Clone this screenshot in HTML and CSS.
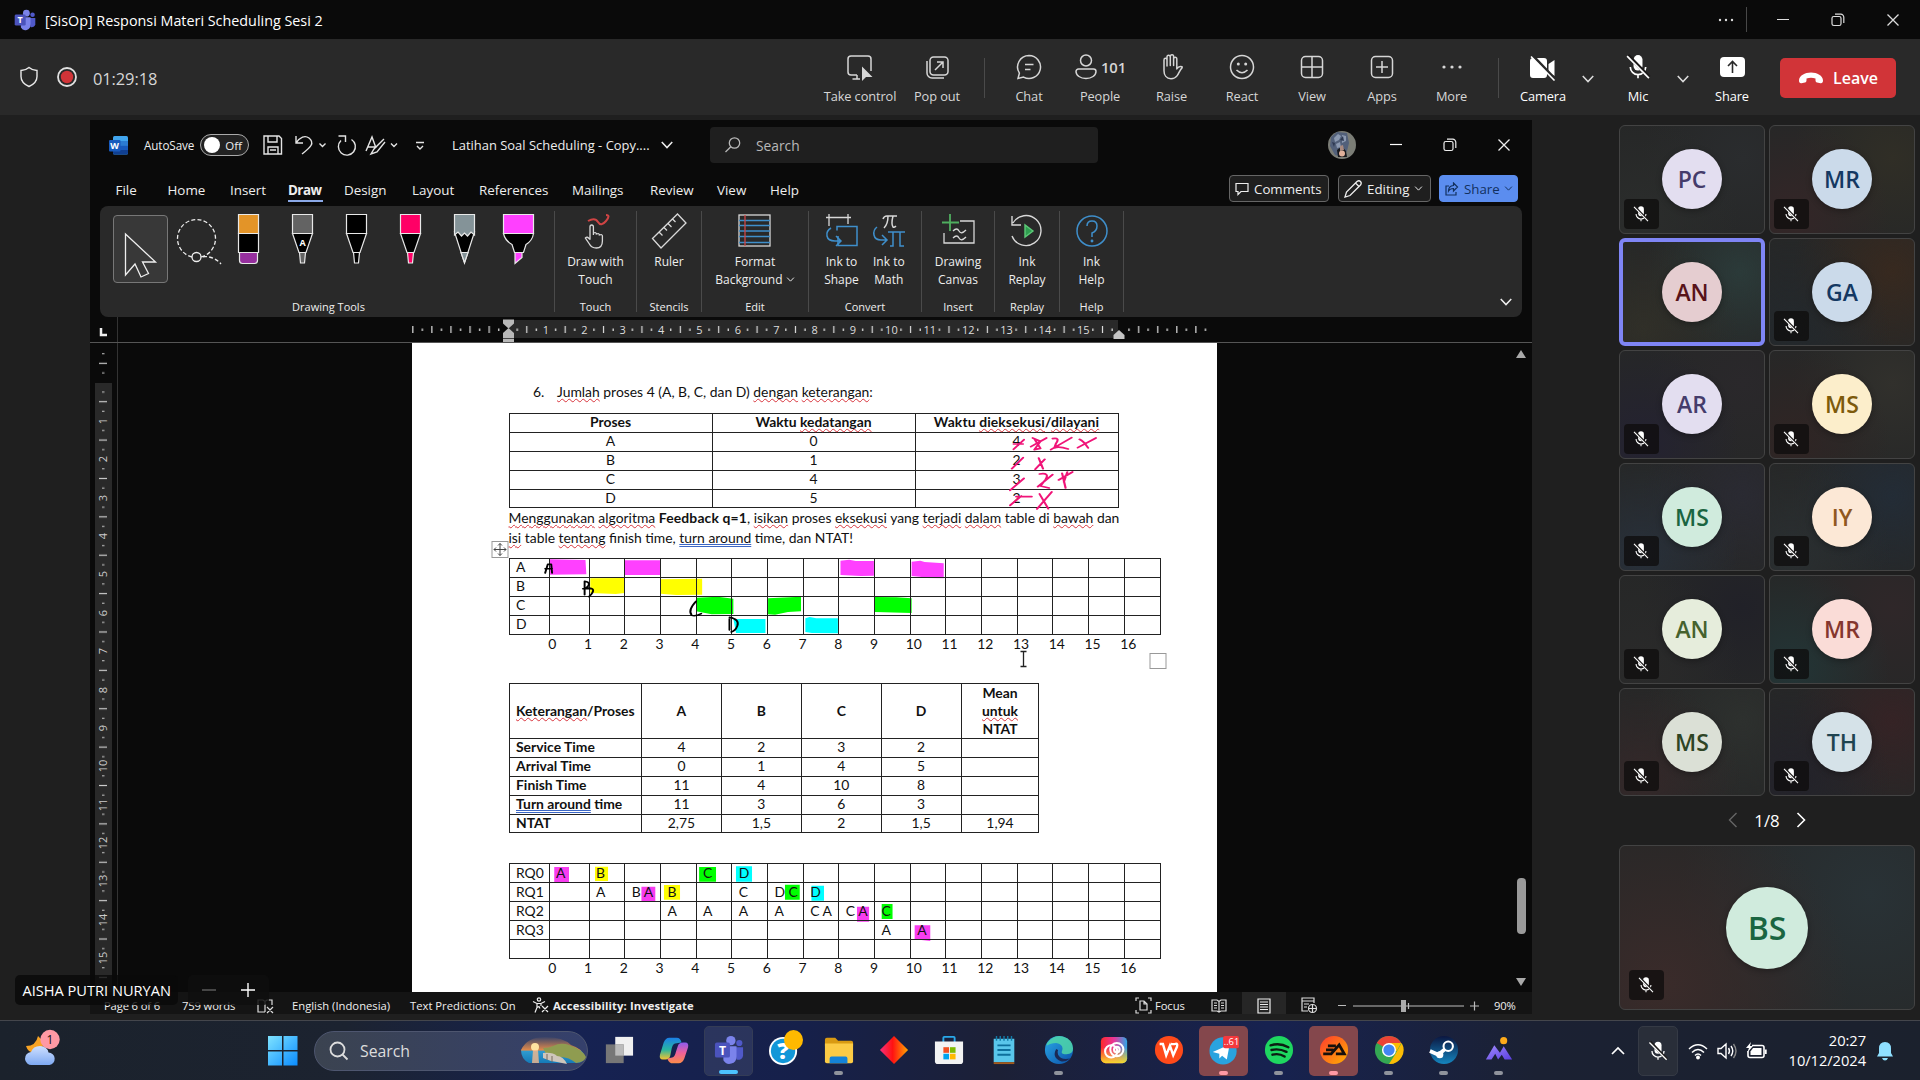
FILE: index.html
```html
<!DOCTYPE html>
<html lang="en">
<head>
<meta charset="utf-8">
<title>[SisOp] Responsi Materi Scheduling Sesi 2</title>
<link rel="stylesheet" href="styles.css">
</head>
<body>
<svg class="defs" width="0" height="0">
  <defs>
    <symbol id="mic-off" viewBox="0 0 20 20"><rect x="6.8" y="1.5" width="6.4" height="11" rx="3.2" fill="currentColor"/><path d="M4.5 10a5.5 5.5 0 0 0 11 0M10 15.5V18" fill="none" stroke="currentColor" stroke-width="1.2"/><path d="M2.8 1.6 18 17.4" stroke="#1c1a1a" stroke-width="2.6"/><path d="M2.2 2.2 17.8 18" stroke="currentColor" stroke-width="1.2"/></symbol>
    <symbol id="chev" viewBox="0 0 12 12"><path d="M1.5 3.5 6 8.2l4.5-4.7" fill="none" stroke="currentColor" stroke-width="1.3"/></symbol>
    <symbol id="restore" viewBox="0 0 14 14"><rect x="1" y="3.5" width="9" height="9" rx="1.8" fill="none" stroke="currentColor" stroke-width="1.2"/><path d="M4 1.2h5.8a3 3 0 0 1 3 3V10" fill="none" stroke="currentColor" stroke-width="1.2"/></symbol>
    <symbol id="close" viewBox="0 0 14 14"><path d="m1.5 1.5 11 11m0-11-11 11" stroke="currentColor" stroke-width="1.3"/></symbol>
    <symbol id="teams" viewBox="0 0 32 32"><circle cx="18" cy="6" r="5" fill="#7b83eb"/><circle cx="27" cy="8.500" r="3.300" fill="#5059c9"/><path d="M22 13h9v9a5 5 0 0 1-7 4z" fill="#5059c9"/><path d="M10 12h14v11a7.500 7.500 0 0 1-14 4z" fill="#7b83eb"/><rect x="1" y="8" width="16" height="16" rx="2" fill="#4b53bc"/><text x="9" y="21" text-anchor="middle" font-size="13" font-weight="700" fill="#fff">T</text></symbol>
    <linearGradient id="gwin" x2="1" y2="1"><stop stop-color="#7fe3ff"/><stop offset="1" stop-color="#0a8cff"/></linearGradient>
    <linearGradient id="gcop" x2="0" y2="1"><stop stop-color="#1b7fe8"/><stop offset=".55" stop-color="#29b6a0"/><stop offset="1" stop-color="#f2c230"/></linearGradient>
    <linearGradient id="gcop2" x2="0" y2="1"><stop stop-color="#8b5cf0"/><stop offset=".5" stop-color="#f0609a"/><stop offset="1" stop-color="#fb8b4a"/></linearGradient>
    <linearGradient id="gdia"><stop stop-color="#f7307c"/><stop offset=".45" stop-color="#ff1212"/><stop offset="1" stop-color="#ffa500"/></linearGradient>
    <linearGradient id="gcc"><stop stop-color="#ff2a2a"/><stop offset=".5" stop-color="#e8359a"/><stop offset="1" stop-color="#2fa8e8"/></linearGradient>
    <linearGradient id="gcc2" x2="0" y2="1"><stop offset=".4" stop-color="#ffd21c" stop-opacity="0"/><stop offset="1" stop-color="#f7d92a"/></linearGradient>
    <linearGradient id="gedge" x2="1" y2="1"><stop stop-color="#2aa9e8"/><stop offset="1" stop-color="#0b51a8"/></linearGradient>
    <linearGradient id="gea" x2="1" y2="1"><stop stop-color="#ff3b2f"/><stop offset="1" stop-color="#ffb000"/></linearGradient>
    <linearGradient id="gst" x2="0" y2="1"><stop stop-color="#0b1640"/><stop offset="1" stop-color="#1586c0"/></linearGradient>
    <linearGradient id="gm" x2="1" y2="1"><stop stop-color="#a18bff"/><stop offset="1" stop-color="#5b3fe0"/></linearGradient>
    <linearGradient id="gsky" x2="0" y2="1"><stop stop-color="#3b4468"/><stop offset=".5" stop-color="#e08a4c"/><stop offset=".55" stop-color="#2f9bd0"/><stop offset="1" stop-color="#157ab8"/></linearGradient>
    <linearGradient id="gcl" x2="0" y2="1"><stop stop-color="#cfe0ff"/><stop offset="1" stop-color="#7ea9f2"/></linearGradient>
  </defs>
</svg>

<header class="titlebar">
  <svg class="t-logo" width="22" height="22"><use href="#teams"/></svg>
  <span class="t-title">[SisOp] Responsi Materi Scheduling Sesi 2</span>
  <div class="t-ctl">
    <svg width="18" height="6" viewBox="0 0 18 6" fill="#ddd"><circle cx="3" cy="3" r="1.200"/><circle cx="9" cy="3" r="1.200"/><circle cx="15" cy="3" r="1.200"/></svg>
    <i class="t-sep"></i>
    <svg class="w-min" width="14" height="14"><path d="M1 6.500h12" stroke="#ddd"/></svg>
    <svg class="w-res" width="14" height="14"><use href="#restore"/></svg>
    <svg class="w-cls" width="14" height="14"><use href="#close"/></svg>
  </div>
</header>

<nav class="toolbar">
  <svg class="shield" width="20" height="22" viewBox="0 0 20 22" fill="none" stroke="#e8e8e8" stroke-width="1.400"><path d="M10 1.500q3.500 3 8 3v6c0 5-3.500 8-8 10-4.500-2-8-5-8-10v-6q4.500 0 8-3z"/></svg>
  <svg class="rec" width="22" height="22" viewBox="0 0 22 22"><circle cx="11" cy="11" r="9" fill="none" stroke="#e0e0e0" stroke-width="1.800"/><circle cx="11" cy="11" r="6.200" fill="#d13438"/></svg>
  <span class="clock">01:29:18</span>
  <div class="tools">
    <div class="tool w80"><svg width="30" height="28" viewBox="0 -1 30 28"><path d="M12 21H6a3 3 0 0 1-3-3V5a3 3 0 0 1 3-3h17a3 3 0 0 1 3 3v12M12 21v4M7.500 25H15" fill="none" stroke="#d6d6d6" stroke-width="1.500"/><path d="M17 12.500v14.500l4-4h6.500z" fill="#d6d6d6"/></svg><span>Take control</span></div>
    <div class="tool w74"><svg width="26" height="28" viewBox="0 -1 26 28" fill="none" stroke="#d6d6d6" stroke-width="1.500"><rect x="6" y="3" width="18" height="18" rx="3.500"/><path d="M3 7v12a5 5 0 0 0 5 5h12M11 16l8-8m-6 0h6v6"/></svg><span>Pop out</span></div>
    <i class="sep w20"></i>
    <div class="tool w70"><svg width="28" height="28" viewBox="0 0 28 28" fill="none" stroke="#d6d6d6" stroke-width="1.500"><path d="M14 2.500a11.500 11.500 0 1 1-5.500 21.600L3 25.500l1.400-5.300A11.500 11.500 0 0 1 14 2.500zM10 11.500h8.500M10 16.500h5.500"/></svg><span>Chat</span></div>
    <div class="tool w72"><div class="pair"><svg width="24" height="28" viewBox="0 0 24 28" fill="none" stroke="#d6d6d6" stroke-width="1.500"><circle cx="12" cy="7.500" r="5.500"/><path d="M4.500 16h15a2.500 2.500 0 0 1 2.500 2.500c0 4-4.500 7-10 7s-10-3-10-7A2.500 2.500 0 0 1 4.500 16z"/></svg><b>101</b></div><span>People</span></div>
    <div class="tool w71"><svg width="26" height="28" viewBox="0 0 26 28" fill="none" stroke="#d6d6d6" stroke-width="1.500" stroke-linejoin="round"><path d="M5 14V7q0-1.700 1.500-1.700T8 7v6V4q0-1.700 1.600-1.700T11.300 4v8.500V3.500q0-1.700 1.700-1.700t1.600 1.700v9V6q0-1.700 1.600-1.700T17.800 6v10c1.300-2.300 3-3 5.200-2.300q.5.300 0 1.200c-2.500 2.500-3 5.500-5 8-1.500 2-3.500 2.800-6 2.800-4.500 0-7-3.500-7-8z"/></svg><span>Raise</span></div>
    <div class="tool w70"><svg width="28" height="28" viewBox="0 0 28 28" fill="none" stroke="#d6d6d6" stroke-width="1.500"><circle cx="14" cy="14" r="11.500"/><path d="M8.500 17q5.500 5.500 11 0"/><g fill="#d6d6d6" stroke="none"><circle cx="10.300" cy="11" r="1.500"/><circle cx="17.700" cy="11" r="1.500"/></g></svg><span>React</span></div>
    <div class="tool w70"><svg width="26" height="28" viewBox="0 0 26 28" fill="none" stroke="#d6d6d6" stroke-width="1.500"><rect x="2.500" y="3.500" width="21" height="21" rx="4"/><path d="M13 3.500v21M2.500 14h21"/></svg><span>View</span></div>
    <div class="tool w70"><svg width="26" height="28" viewBox="0 0 26 28" fill="none" stroke="#d6d6d6" stroke-width="1.500"><rect x="2.500" y="3.500" width="21" height="21" rx="4"/><path d="M13 8v12M7 14h12"/></svg><span>Apps</span></div>
    <div class="tool w69"><svg width="26" height="28" viewBox="0 0 26 28" fill="#d6d6d6"><circle cx="5" cy="14" r="1.600"/><circle cx="13" cy="14" r="1.600"/><circle cx="21" cy="14" r="1.600"/></svg><span>More</span></div>
    <i class="sep w24"></i>
    <div class="tool on w66"><svg width="28" height="28" viewBox="0 -1 28 28"><path d="M4 4h11a3 3 0 0 1 3 3v14a3 3 0 0 1-3 3H4a3 3 0 0 1-3-3V7a3 3 0 0 1 3-3zM19.500 10l6-4v16l-6-4z" fill="#fff"/><path d="M3.500 1.500 27 26" stroke="#292929" stroke-width="3"/><path d="M2 2.500 25.500 26.500" stroke="#fff" stroke-width="1.600"/></svg><span>Camera</span></div>
    <svg class="chv w24" height="12"><use href="#chev" width="24" height="14"/></svg>
    <div class="tool on w76"><svg width="28" height="28"><use href="#mic-off"/></svg><span>Mic</span></div>
    <svg class="chv w14" height="14"><use href="#chev"/></svg>
    <div class="tool on w84"><svg width="28" height="28" viewBox="0 -1 28 28"><rect x="2" y="3" width="25" height="20" rx="4" fill="#fff"/><path d="M14.500 19V8m-4.500 4 4.500-4.500L19 12" fill="none" stroke="#292929" stroke-width="1.600"/></svg><span>Share</span></div>
    <div class="leave"><svg width="26" height="14" viewBox="0 0 26 14"><path d="M1 9.500C1 4.500 7 1.500 13 1.500s12 3 12 8c0 2-1 3-2.500 2.700l-3.500-.8c-1-.2-1.500-1-1.500-2.200V7.500q-4.500-1.600-9 0v1.700c0 1.200-.5 2-1.500 2.200l-3.500.8C2 12.500 1 11.500 1 9.500z" fill="#fff"/></svg>Leave</div>
  </div>
</nav>

<main class="stage">
  <section class="word">
    <div class="w-title">
      <svg class="w-logo" width="19" height="19" viewBox="0 0 19 19"><rect x="4" width="15" height="18.500" rx="1.500" fill="#41a5ee"/><path d="M4 5h15v4.500H4z" fill="#2b7cd3"/><path d="M4 9.500h15V14H4z" fill="#185abd"/><path d="M4 14h15v3a1.500 1.500 0 0 1-1.500 1.500h-12A1.500 1.500 0 0 1 4 17z" fill="#103f91"/><rect y="4" width="11.500" height="11.500" rx="1" fill="#185abd"/><text x="5.700" y="13" text-anchor="middle" font-size="9" font-weight="700" fill="#fff">W</text></svg>
      <span class="autosave">AutoSave</span>
      <span class="toggle"><i></i>Off</span>
      <svg class="qa" width="170" height="24" viewBox="262 133 170 24" fill="none" stroke="#e4e4e4" stroke-width="1.400">
        <path d="M264 136h15l2.500 2.500V154H264zM268 136v6h9v-6M268 154v-7h10v7M270 150h6"/>
        <path d="M296 136v7h7M296 143c4-6 9-8 13-5 6 5 2 9-7 16"/><path d="m319.500 143.500 3 3 3-3"/>
        <path d="M351.500 139.500a8.500 8.500 0 1 1-10.500 1M338.500 136h7v6"/>
        <path d="m366 151 6-14 4 11M368 147h7M384 139l-10 10-3 5 6-2 8-10"/><path d="m391 143.500 3 3 3-3"/>
        <path d="M416 142.500h8M417 146l3 3 3-3"/>
      </svg>
      <span class="docname">Latihan Soal Scheduling - Copy....</span>
      <svg class="dchev" width="14" height="14"><use href="#chev"/></svg>
      <div class="w-search"><svg width="18" height="18" viewBox="0 0 18 18" fill="none" stroke="#b8b8b8" stroke-width="1.300"><circle cx="10.500" cy="7" r="5.200"/><path d="M6.800 10.700 1.500 16"/></svg>Search</div>
      <svg class="w-ava" width="28" height="28" viewBox="0 0 28 28"><circle cx="14" cy="14" r="14" fill="#7b7d76"/><path d="m3 6 6-5 10 1 2 10-2 8-5 6-7-2-5-9z" fill="#52607a"/><path d="m6 7 4-4 3 2-2 4-4 2zM14 4l4 1v5l-4 2zM8 13l4-2 1 5-4 1z" fill="#9aa7bf" opacity=".8"/><path d="m4 11 3 1-1 4zM12 9l3-4 1 5z" fill="#2e3952"/><path d="M9 19q5-5 9 1l1 6h-9z" fill="#17181c"/><path d="m12 15 3-1 1 5-4 1z" fill="#a98a80"/><circle cx="14" cy="22.500" r="3" fill="#e0b09a"/></svg>
      <svg class="wm" width="14" height="14"><path d="M1 6.500h12" stroke="#fff" stroke-width="1.200"/></svg>
      <svg class="wr" width="14" height="14"><use href="#restore"/></svg>
      <svg class="wc" width="14" height="14"><use href="#close"/></svg>
    </div>
    <div class="w-tabs">
      <span class="tab a1">File</span><span class="tab a2">Home</span><span class="tab a3">Insert</span><span class="tab a4 cur">Draw</span><span class="tab a5">Design</span><span class="tab a6">Layout</span><span class="tab a7">References</span><span class="tab a8">Mailings</span><span class="tab a9">Review</span><span class="tab a10">View</span><span class="tab a11">Help</span>
      <div class="w-acts">
        <span class="act c1"><svg width="14" height="14" viewBox="0 0 14 14" fill="none" stroke="#eee" stroke-width="1.200"><path d="M1 1.500h12v8H6L3 12.500v-3H1z"/></svg>Comments</span>
        <span class="act c2"><svg width="20" height="20" viewBox="0 0 20 20" fill="none" stroke="#eee" stroke-width="1.300"><path d="m2 18 1.500-5L14 2.500q2-1.500 3.500 0t0 3.500L7 16.500zM12.500 4l3.500 3.500"/></svg>Editing<svg class="mc" width="9" height="9"><use href="#chev"/></svg></span>
        <span class="act c3"><svg width="14" height="14" viewBox="0 0 14 14" fill="none" stroke="#12305e" stroke-width="1.200"><path d="M4 4H1v9h10v-3M8.500 1l4 4-4 4V6.500Q5 6.500 3.500 9q0-5 5-5.500z"/></svg>Share<svg class="mc" width="9" height="9"><use href="#chev"/></svg></span>
      </div>
    </div>
    <div class="ribbon">
      <div class="grp g1">
        <div class="pens">
          <div class="sel"><svg width="36" height="50" viewBox="0 0 36 50" fill="none" stroke="#eee" stroke-width="1.300"><path d="M3.500 4v41l9.500-11 6 13 7.500-3.500-6-11.500h13z"/></svg></div>
          <svg class="lasso" width="50" height="52" viewBox="0 0 50 52" fill="none" stroke="#eee" stroke-width="1.300"><path d="M19 41A19 19 0 1 1 28 41q12-2 20 7" stroke-dasharray="4 2.200"/><circle cx="23.500" cy="41" r="4.500"/></svg>
          <svg class="pn" width="300" height="52" viewBox="236 213 300 52" stroke="#e8e8e8" stroke-width="1.200">
            <path d="M238.500 214.500h20v19h-20z" fill="#e39428"/><path d="M238.500 233.500h20v19h-20z" fill="#000"/><path d="M239.500 252.500h18v8q0 3-3 3h-12q-3 0-3-3z" fill="#962f9e"/>
            <path d="M292.500 214.500h20v19h-20z" fill="#636363"/><path d="M292.500 233.500h20l-6.500 19h-7z" fill="#000"/><path d="M299.500 252.500h6l-1 10.500h-4z" fill="#636363"/><text x="302.500" y="246" font-size="9" font-weight="700" fill="#fff" stroke="none" text-anchor="middle">A</text>
            <path d="M346.500 214.500h20v19h-20z" fill="#000"/><path d="M346.500 233.500h20l-6.500 19h-7z" fill="#000"/><path d="M353.500 252.500h6l-1 10.500h-4z" fill="#000"/>
            <path d="M400.500 214.500h20v19h-20z" fill="#ff0066"/><path d="M400.500 233.500h20l-6.500 19h-7z" fill="#000"/><path d="M407.500 252.500h6l-1 10.500h-4z" fill="#ff0066"/>
            <path d="M454.500 232l10 31 10-31z" fill="#000"/><path d="M461 252.500h7l-3.500 10z" fill="#849398"/><path d="M454.500 214.500h20V235l-3.500-3-3.500 4-3-3-3 3-3.500-4-3.500 3z" fill="#849398"/>
            <path d="M503.500 214.500h30v19h-30z" fill="#ff40ff"/><path d="M503.500 233.500h30q-1 7-7.500 11l-2.500 8h-9l-2.500-8q-7-4-8.500-11z" fill="#000"/><path d="M515 252.500h7v5l-7 6z" fill="#ff40ff"/>
          </svg>
        </div>
        <em>Drawing Tools</em>
      </div>
      <div class="grp g2"><svg width="34" height="36" viewBox="0 0 34 36" fill="none" stroke="#d8d8d8" stroke-width="1.300"><path d="M9 8q7-4 10 1t8-1 0-6" stroke="#d04444" stroke-width="2"/><path d="M11 26V14q0-2 1.700-2t1.700 2v8-2q3-1 3 1 3-1 3 1 3-1 3 1v5q0 7-6 7-5 0-7-4l-4-6q2-2 4 1z"/></svg><span>Draw with<br>Touch</span><em>Touch</em></div>
      <div class="grp g3"><svg width="36" height="36" viewBox="0 0 36 36" fill="none" stroke="#d8d8d8" stroke-width="1.300"><path d="M1.500 25.500 26.500 1 35 10 10 35zM8 19l3.500 3.500M13 14.500l3 3M17 10.500l3.500 3.500M21.500 6l3 3"/></svg><span>Ruler</span><em>Stencils</em></div>
      <div class="grp g4"><svg width="34" height="34" viewBox="0 0 34 34" fill="none" stroke="#d8d8d8" stroke-width="1.300"><rect x="1" y="1" width="31" height="31"/><path d="M1 6.500h31M1 11.500h31M1 17h31M1 22.500h31M1 28.500h31" stroke="#3f8fcb" stroke-width="1.500"/><path d="M7 1v31" stroke="#d04444"/></svg><span>Format<br>Background <svg width="9" height="9"><use href="#chev"/></svg></span><em>Edit</em></div>
      <div class="grp g5"><div class="two"><div><svg width="34" height="34" viewBox="0 0 34 34" fill="none" stroke="#d8d8d8" stroke-width="1.300"><path d="M4 0v12M23 0v10M1 3.500h25"/><path d="M13 22v9.500h19v-19H12v4" stroke="#3f8fcb" stroke-width="1.500"/><path d="M6 14q-5 3-4 8t8 5h5m-4-5 5 5-5 5" stroke="#3f8fcb" stroke-width="1.500"/></svg><span>Ink to<br>Shape</span></div><div><svg width="34" height="34" viewBox="0 0 34 34" fill="none" stroke="#d8d8d8" stroke-width="1.500"><path d="M11 5q1-3 4-3h10M16 2q0 8-4 12M21 2q-2 8 0 11 1 1 3-1"/><path d="M16 18h17M21 18v14h-3M28 18v14h4" stroke="#3f8fcb"/><path d="M5 13q-4 3-3 8t7 5h5m-4-5 5 5-5 5" stroke="#3f8fcb"/></svg><span>Ink to<br>Math</span></div></div><em>Convert</em></div>
      <div class="grp g6"><svg width="36" height="34" viewBox="0 0 36 34" fill="none" stroke="#d8d8d8" stroke-width="1.300"><path d="M4 19v10h30V7H20M13 17q4-4 6 0t7-1M13 24q4-4 6 0t7-1"/><path d="M10 0v17M2 8.500h17" stroke="#4fae5f" stroke-width="1.800"/></svg><span>Drawing<br>Canvas</span><em>Insert</em></div>
      <div class="grp g7"><svg width="34" height="34" viewBox="0 0 34 34" fill="none" stroke="#d8d8d8" stroke-width="1.400"><path d="M3 9a15 15 0 1 1-1 13M2 2v9h9"/><path d="M15 11v12l8-6z" fill="#2f9e50" stroke="#5cc977"/></svg><span>Ink<br>Replay</span><em>Replay</em></div>
      <div class="grp g8"><svg width="34" height="34" viewBox="0 0 34 34" fill="none" stroke="#3f8fcb" stroke-width="1.500"><circle cx="17" cy="17" r="15"/><path d="M12 12q0-5 5-5t5 5-5 7v4"/><circle cx="17" cy="27" r=".7"/></svg><span>Ink<br>Help</span><em>Help</em></div>
      <svg class="rchev" width="14" height="14"><use href="#chev"/></svg>
    </div>
    <svg class="hruler" width="1442" height="26" viewBox="90 317 1442 26">
      <defs>
        <pattern id="tk" patternUnits="userSpaceOnUse" x="507.600" y="0" width="38.380" height="343"><path d="M19.200 326v7" stroke="#ddd" stroke-width="1.200"/><path d="M9.600 328.500v2.500M28.800 328.500v2.500" stroke="#ddd" stroke-width="1.300"/></pattern>
        <pattern id="tl" patternUnits="userSpaceOnUse" x="412" y="0" width="19.100" height="343"><path d="M.8 326v7" stroke="#ddd" stroke-width="1.200"/><path d="M10.300 328.500v2.500" stroke="#ddd" stroke-width="1.300"/></pattern>
      </defs>
      <rect x="508" y="320" width="610" height="18" fill="#292929"/>
      <rect x="412" y="320" width="92" height="20" fill="url(#tl)"/>
      <rect x="515" y="320" width="603" height="20" fill="url(#tk)"/>
      <rect x="1121" y="320" width="90" height="20" fill="url(#tl)"/>
      <g font-size="11" fill="#ddd" text-anchor="middle"><text x="546" y="333.500">1</text><text x="584.400" y="333.500">2</text><text x="622.700" y="333.500">3</text><text x="661.100" y="333.500">4</text><text x="699.500" y="333.500">5</text><text x="737.900" y="333.500">6</text><text x="776.300" y="333.500">7</text><text x="814.600" y="333.500">8</text><text x="853" y="333.500">9</text><text x="891.400" y="333.500">10</text><text x="929.800" y="333.500">11</text><text x="968.200" y="333.500">12</text><text x="1006.500" y="333.500">13</text><text x="1044.900" y="333.500">14</text><text x="1083.300" y="333.500">15</text></g>
      <path d="M503 319.500h11v4l-5.500 5-5.500-5zM503 342v-9l5.500-5 5.500 5v9z" fill="#b8b8b8"/><path d="M503 338.500h11" stroke="#444"/>
      <path d="M1113.500 339v-4l5.500-5 5.500 5v4z" fill="#c4c4c4"/>
      <path d="M101 328v7h6" fill="none" stroke="#eee" stroke-width="2.500"/>
      <path d="M117.500 317v26" stroke="#333"/><path d="M90 342.500h1442" stroke="#555"/>
    </svg>
    <div class="docarea">
      <svg class="vruler" width="32" height="649" viewBox="90 343 32 649">
        <defs><pattern id="tv" patternUnits="userSpaceOnUse" x="0" y="382.500" width="120" height="38.380"><path d="M99 19.200h8" stroke="#ccc" stroke-width="1.200"/><path d="M102 9.600h2.500M102 28.800h2.500" stroke="#ccc" stroke-width="1.200"/></pattern></defs>
        <rect x="95" y="383" width="17" height="609" fill="#292929"/>
        <rect x="95" y="346" width="17" height="646" fill="url(#tv)"/>
        <path d="M117.500 343v649" stroke="#333"/>
        <g font-size="11" fill="#ccc" text-anchor="middle"><text transform="translate(107 421) rotate(-90)">1</text><text transform="translate(107 459) rotate(-90)">2</text><text transform="translate(107 498) rotate(-90)">3</text><text transform="translate(107 536) rotate(-90)">4</text><text transform="translate(107 574) rotate(-90)">5</text><text transform="translate(107 613) rotate(-90)">6</text><text transform="translate(107 651) rotate(-90)">7</text><text transform="translate(107 690) rotate(-90)">8</text><text transform="translate(107 728) rotate(-90)">9</text><text transform="translate(107 766) rotate(-90)">10</text><text transform="translate(107 805) rotate(-90)">11</text><text transform="translate(107 843) rotate(-90)">12</text><text transform="translate(107 881) rotate(-90)">13</text><text transform="translate(107 920) rotate(-90)">14</text><text transform="translate(107 958) rotate(-90)">15</text></g>
      </svg>
      <article class="page">
        <p class="q"><span>6.</span><u>Jumlah</u> proses 4 (A, B, C, dan D) <u>dengan</u> <u>keterangan</u>:</p>
        <table class="tb1">
          <tr><th>Proses</th><th>Waktu <u>kedatangan</u></th><th>Waktu <u>dieksekusi</u>/<u>dilayani</u></th></tr>
          <tr><td>A</td><td>0</td><td>4</td></tr>
          <tr><td>B</td><td>1</td><td>2</td></tr>
          <tr><td>C</td><td>4</td><td>3</td></tr>
          <tr><td>D</td><td>5</td><td>2</td></tr>
        </table>
        <p class="para"><u>Menggunakan</u> <u>algoritma</u> <b>Feedback q=1</b>, <u>isikan</u> proses <u>eksekusi</u> yang <u>terjadi</u> <u>dalam</u> table di <u>bawah</u> dan<br><u>isi</u> table <u>tentang</u> finish time, <u class="bl">turn around</u> time, dan NTAT!</p>
        <table class="gantt">
          <tr><td>A<td><td><td><td><td><td><td><td><td><td><td><td><td><td><td><td><td>
          <tr><td>B<td><td><td><td><td><td><td><td><td><td><td><td><td><td><td><td><td>
          <tr><td>C<td><td><td><td><td><td><td><td><td><td><td><td><td><td><td><td><td>
          <tr><td>D<td><td><td><td><td><td><td><td><td><td><td><td><td><td><td><td><td>
        </table>
        <div class="axis"><span>0</span><span>1</span><span>2</span><span>3</span><span>4</span><span>5</span><span>6</span><span>7</span><span>8</span><span>9</span><span>10</span><span>11</span><span>12</span><span>13</span><span>14</span><span>15</span><span>16</span></div>
        <table class="tb3">
          <tr class="hd"><th><u>Keterangan</u>/Proses</th><th>A</th><th>B</th><th>C</th><th>D</th><th>Mean<br><u>untuk</u><br>NTAT</th></tr>
          <tr><th>Service Time</th><td>4</td><td>2</td><td>3</td><td>2</td><td></td></tr>
          <tr><th>Arrival Time</th><td>0</td><td>1</td><td>4</td><td>5</td><td></td></tr>
          <tr><th>Finish Time</th><td>11</td><td>4</td><td>10</td><td>8</td><td></td></tr>
          <tr><th><u class="bl">Turn around</u> time</th><td>11</td><td>3</td><td>6</td><td>3</td><td></td></tr>
          <tr><th>NTAT</th><td>2,75</td><td>1,5</td><td>2</td><td>1,5</td><td>1,94</td></tr>
        </table>
        <table class="gantt rq">
          <tr><td>RQ0</td><td>A</td><td>B</td><td></td><td></td><td>C</td><td>D</td><td></td><td></td><td></td><td></td><td></td><td></td><td></td><td></td><td></td><td></td><td></td></tr>
          <tr><td>RQ1</td><td></td><td>A</td><td>B&nbsp;A</td><td>B</td><td></td><td>C</td><td>D&nbsp;C</td><td>D</td><td></td><td></td><td></td><td></td><td></td><td></td><td></td><td></td><td></td></tr>
          <tr><td>RQ2</td><td></td><td></td><td></td><td>A</td><td>A</td><td>A</td><td>A</td><td>C&nbsp;A</td><td>C&nbsp;A</td><td>C</td><td></td><td></td><td></td><td></td><td></td><td></td><td></td></tr>
          <tr><td>RQ3</td><td></td><td></td><td></td><td></td><td></td><td></td><td></td><td></td><td></td><td>A</td><td>A</td><td></td><td></td><td></td><td></td><td></td><td></td></tr>
          <tr><td></td><td></td><td></td><td></td><td></td><td></td><td></td><td></td><td></td><td></td><td></td><td></td><td></td><td></td><td></td><td></td><td></td><td></td></tr>
        </table>
        <div class="axis"><span>0</span><span>1</span><span>2</span><span>3</span><span>4</span><span>5</span><span>6</span><span>7</span><span>8</span><span>9</span><span>10</span><span>11</span><span>12</span><span>13</span><span>14</span><span>15</span><span>16</span></div>
        <svg class="marks" width="805" height="649" viewBox="411.500 343 805 649">
          <g transform="translate(490 370) scale(.4337 .3333)">
            <path d="M137 568l82 2 2 43-84 1zM310 571h81v44h-81zM807 572l20-3 15 4h42v44l-30 1-47-3zM971 575l20-3 10 4 44 4v45l-40-1-15-4-19-2z" fill="#ff40ff"/>
            <path d="M230 625l78-1 1 45-20 3-59-3zM392 628l96-2v48l-60 1-36-4z" fill="#ff0"/>
            <path d="M474 683l50-3 36 6v46l-50 1-36-9zM640 685l76-5v44l-30 2-30 8-16-1zM886 681l50 1 35 3v44l-85-3z" fill="#0f0"/>
            <path d="M560 747h74v42h-68zM726 745l10-4 15 4h50v45l-60-1-15-3z" fill="#0ff"/>
          </g>
          <g transform="translate(490 660) scale(.4337 .3333)">
            <path d="M147 621h34v45h-34zM348 680h32v43h-32zM845 740h28v45h-28zM978 796h36v47l-36-5z" fill="#f83df0"/>
            <path d="M241 620h30v43h-30zM400 675h37v44h-37z" fill="#ff0"/>
            <path d="M481 621h39v44h-39zM679 674h34v45h-34zM902 732h25v45h-25z" fill="#0f0"/>
            <path d="M566 619h37v46h-37zM740 677h29v45h-29z" fill="#0ff"/>
          </g>
        </svg>
        <svg class="ink" width="805" height="649" viewBox="411.500 343 805 649" fill="none">
          <g transform="translate(490 370) scale(.4337 .3333)" stroke-linecap="round" stroke-linejoin="round">
            <g stroke="#f01478" stroke-width="5">
              <path d="M1206 238l24-29M1206 222h22M1250 204l18 10-14 25 14-4-14-28M1246 230l36-26M1296 206q18-4 8 14l-4 14q10-6 32 3M1292 239l48-36M1358 208q10 6 20 26M1354 233l42-29"/>
              <path d="M1202 296l26-33M1264 264l10 32M1256 298l22-30M1198 361l32-36M1266 312q24-5 14 16l-12 20 20 6M1262 350l34-36M1318 310l8 44M1310 330l32-24M1330 306l-8 30"/>
              <path d="M1198 406l26-28M1212 380h36M1266 372l20 44M1260 417l34-51"/>
            </g>
            <g stroke="#000" stroke-width="4.500">
              <path d="M126 609l6-26 8 0 2 26M126 596h16"/><path d="M217 634v40M217 634q18 4 4 19 28 0 6 27M213 656h18"/><path d="M474 694q-20 28-10 42 8 4 22-5"/><path d="M551 746v34M551 742q24 6 18 26-4 14-14 18"/>
            </g>
          </g>
          <path d="M1020 651.500h6M1023 651.500v15M1020 666.500h6" stroke="#222" stroke-width="1.300"/>
          <rect x="1149.500" y="653.500" width="16" height="15" fill="#fff" stroke="#999"/>
          <rect x="491.500" y="541.500" width="16" height="16" fill="#fff" stroke="#999"/>
          <path d="M499.500 543.500v12M493.500 549.500h12M497.500 545.500l2-2 2 2M497.500 553.500l2 2 2-2M495.500 547.500l-2 2 2 2M503.500 547.500l2 2-2 2" stroke="#444"/>
        </svg>
      </article>
      <div class="scroll"><svg width="12" height="10"><path d="M6 1l5 8H1z" fill="#aaa"/></svg><i></i><svg width="12" height="10"><path d="M6 9 1 1h10z" fill="#aaa"/></svg></div>
    </div>
    <div class="status">
      <span class="s1">Page 6 of 6</span><span class="s2">759 words</span>
      <svg class="s3" width="17" height="16" viewBox="0 0 17 16" fill="none" stroke="#ddd" stroke-width="1.200"><path d="M8 14H1V2h5l2 1.500L10 2h5v5M8 3.500V14M10 9l6 6m0-6-6 6"/></svg>
      <span class="s4">English (Indonesia)</span><span class="s5">Text Predictions: On</span>
      <svg class="s6" width="17" height="17" viewBox="0 0 17 17" fill="none" stroke="#eee" stroke-width="1.200"><circle cx="7" cy="2.500" r="1.700"/><path d="M1 4.500l4 2v4l-2 5M13 4.500l-4 2-4 0M9 6.500V9M5 10.500l2-1 1 2M10 9l6 6m0-6-6 6"/></svg>
      <b class="s7">Accessibility: Investigate</b>
      <svg class="s8" width="17" height="17" viewBox="0 0 17 17" fill="none" stroke="#ddd" stroke-width="1.200"><path d="M1 4V1h3M13 1h3v3M16 13v3h-3M4 16H1v-3M5 4h4l3 3v6H5zM9 4v3h3"/></svg>
      <span class="s9">Focus</span>
      <svg class="s10" width="16" height="16" viewBox="0 0 16 16" fill="none" stroke="#ddd" stroke-width="1.200"><path d="M1 2h5l2 1.500L10 2h5v11h-5l-2 1-2-1H1zM8 3.500V14M3 5h3M3 7.500h3M3 10h3M10 5h3M10 7.500h3M10 10h3"/></svg>
      <span class="s11"><svg width="14" height="16" viewBox="0 0 14 16" fill="none" stroke="#eee" stroke-width="1.200"><path d="M1 1h12v14H1zM3 4h8M3 6.500h8M3 9h8M3 11.500h8"/></svg></span>
      <svg class="s12" width="17" height="17" viewBox="0 0 17 17" fill="none" stroke="#ddd" stroke-width="1.200"><path d="M7 14H1V1h12v5M1 4h12M3 7h5M3 10h3"/><circle cx="11.500" cy="11.500" r="4"/><path d="M7.500 11.500h8M11.500 7.500v8"/></svg>
      <svg class="s13" width="142" height="16" viewBox="0 0 142 16" stroke="#bbb" stroke-width="1.200"><path d="M1 7.500h8M16 8h111M133 8h9M137.500 3.500v9"/><path d="M66.500 2v12" stroke="#aaa" stroke-width="5"/><path d="M71.500 5v6"/></svg>
      <span class="s14">90%</span>
    </div>
  </section>
  <div class="who">AISHA PUTRI NURYAN</div>
  <div class="zoomer"><svg width="16" height="16"><path d="M1 8h14" stroke="#666" stroke-width="1.300"/></svg><svg width="16" height="16"><path d="M1 8h14M8 1v14" stroke="#fff" stroke-width="1.400"/></svg></div>

  <aside class="people">
    <div class="tiles">
      <div class="tile k1"><b>PC</b><i><svg><use href="#mic-off"/></svg></i></div>
      <div class="tile k2"><b>MR</b><i><svg><use href="#mic-off"/></svg></i></div>
      <div class="tile k3 talk"><b>AN</b></div>
      <div class="tile k4"><b>GA</b><i><svg><use href="#mic-off"/></svg></i></div>
      <div class="tile k5"><b>AR</b><i><svg><use href="#mic-off"/></svg></i></div>
      <div class="tile k6"><b>MS</b><i><svg><use href="#mic-off"/></svg></i></div>
      <div class="tile k7"><b>MS</b><i><svg><use href="#mic-off"/></svg></i></div>
      <div class="tile k8"><b>IY</b><i><svg><use href="#mic-off"/></svg></i></div>
      <div class="tile k9"><b>AN</b><i><svg><use href="#mic-off"/></svg></i></div>
      <div class="tile k10"><b>MR</b><i><svg><use href="#mic-off"/></svg></i></div>
      <div class="tile k11"><b>MS</b><i><svg><use href="#mic-off"/></svg></i></div>
      <div class="tile k12"><b>TH</b><i><svg><use href="#mic-off"/></svg></i></div>
    </div>
    <div class="pager"><svg width="10" height="16"><path d="M8.500 1 1.500 8l7 7" fill="none" stroke="#666" stroke-width="1.400"/></svg><span>1/8</span><svg width="10" height="16"><path d="m1.500 1 7 7-7 7" fill="none" stroke="#fff" stroke-width="1.600"/></svg></div>
    <div class="tile big k13"><b>BS</b><i><svg><use href="#mic-off"/></svg></i></div>
  </aside>
</main>

<footer class="taskbar">
  <svg class="weather" width="36" height="40" viewBox="24 1026 36 40"><path d="M38 1035q-2 10-12 10 2 7 9 7 9-2 8-12z" fill="#f7a325"/><circle cx="50" cy="1038.500" r="9.700" fill="#ff99a4"/><text x="50" y="1043" font-size="12" text-anchor="middle" fill="#111">1</text><path d="M32 1064a6.500 6.500 0 0 1-1-13q2-6 9-6t8.500 6.500a6.300 6.300 0 0 1 1 12.500z" fill="url(#gcl)"/></svg>
  <svg class="win" width="30" height="30" viewBox="0 0 30 30" fill="url(#gwin)"><path d="M0 0h14v14H0zM15.500 0h14v14h-14zM0 15.500h14v14H0zM15.500 15.500h14v14h-14z"/></svg>
  <div class="t-search"><svg width="20" height="20" viewBox="0 0 20 20" fill="none" stroke="#ddd" stroke-width="1.800"><circle cx="8.500" cy="8.500" r="7"/><path d="m13.500 13.500 5 5"/></svg><span>Search</span>
    <svg class="scene" width="68" height="30" viewBox="0 0 68 30"><path d="M2 14Q8 1 26 1q18 0 26 8 12 4 14 12-2 6-8 6H10Q2 23 2 14z" fill="url(#gsky)"/><circle cx="16" cy="11" r="4" fill="#ffe2a0"/><path d="M14 14h5l1 13h-7z" fill="#f5b98c" opacity=".8"/><path d="M24 12q6 0 10-2 8-4 16-1 14 5 17 12-1 5-10 6-8-7-18-6-10 0-12-3z" fill="#8f9c50"/><path d="M24 17q10-1 14 3 6 0 10 8l-10-2-6-1-8-3z" fill="#cfc6bb"/><path d="M28 24v-6M33 26v-6" stroke="#776a5f"/></svg>
  </div>
  <div class="apps">
    <div class="app"><svg viewBox="0 0 32 32"><path d="M12 2h19v20H12z" fill="#f0f0f0"/><path d="M2 10h19v20H2z" fill="#777"/><path d="M12 10h9v12h-9z" fill="#bbb"/></svg></div>
    <div class="app"><svg viewBox="0 0 32 32"><path d="M11 3h8q4 0 5 5l-7 1q-3 1-4 8l-1 5q-1 4-5 4H4q-4 0-3-5l4-13q2-5 6-5z" fill="url(#gcop)"/><path d="M25 8h3q4 0 3 5l-4 12q-2 5-6 5h-8q-3-1-4-5l5-1q3-1 4-6l2-6q1-4 6-4z" fill="url(#gcop2)"/></svg></div>
    <div class="app act2"><svg viewBox="0 0 32 32"><use href="#teams"/></svg><i class="run wide"></i></div>
    <div class="app"><svg viewBox="0 0 32 32"><circle cx="15" cy="17" r="15" fill="#fff"/><circle cx="15" cy="17" r="13" fill="#1297d8"/><text x="15" y="26" text-anchor="middle" font-size="25" font-weight="800" fill="#fff">?</text></svg><i class="dot"></i></div>
    <div class="app"><svg viewBox="0 0 32 32"><path d="M1 5q0-2 2-2h9l3 3h14q2 0 2 2v4H1z" fill="#d99a12"/><path d="M1 9h30v19q0 2-2 2H3q-2 0-2-2z" fill="#fccb45"/><path d="M6 30v-5q0-2 2-2h15q2 0 2 2v5z" fill="#1483d8"/></svg><i class="run"></i></div>
    <div class="app"><svg viewBox="0 0 32 32"><path d="m16 1 15 15-15 15L1 16z" fill="url(#gdia)"/></svg></div>
    <div class="app"><svg viewBox="0 0 32 32"><path d="M10 8V3q0-1 1-1h10q1 0 1 1v5" fill="none" stroke="#29a8ea" stroke-width="2"/><path d="M1 7h30v21q0 3-3 3H4q-3 0-3-3z" fill="#f3f3f3"/><path d="M10 13h6v6h-6z" fill="#f25022"/><path d="M17 13h6v6h-6z" fill="#7fba00"/><path d="M10 20h6v6h-6z" fill="#00a4ef"/><path d="M17 20h6v6h-6z" fill="#ffb900"/></svg></div>
    <div class="app"><svg viewBox="0 0 32 32"><path d="M5 4h22v25H5z" fill="#59c6ea"/><path d="M5 29h22v2H5z" fill="#a35a1d"/><path d="M8 1v5M12 1v5M16 1v5M20 1v5M24 1v5" stroke="#127ba8" stroke-width="1.500"/><path d="M9 11h14M9 16h14M9 21h14" stroke="#0d6f9c" stroke-width="2"/></svg></div>
    <div class="app"><svg viewBox="0 0 32 32"><circle cx="16" cy="16" r="15" fill="url(#gedge)"/><path d="M3 9Q10-1 20 1.500q11 3 11 13 0 6-7 6-6 0-5-3 3-7-6-9-6 0-10 3z" fill="#4fd6a8" opacity=".85"/><path d="M13 15q-5 9 5 13 5 1 10-3-10 2-13-4-1-3 0-5z" fill="#1b2a55"/></svg><i class="run"></i></div>
    <div class="app"><svg viewBox="0 0 32 32"><rect x="2" y="2" width="28" height="28" rx="5" fill="url(#gcc)"/><rect x="2" y="2" width="28" height="28" rx="5" fill="url(#gcc2)"/><g fill="none" stroke="#fff" stroke-width="2.200"><circle cx="13" cy="17.500" r="6.500"/><circle cx="19" cy="15.500" r="7"/><circle cx="19" cy="15.500" r="3"/></g></svg></div>
    <div class="app"><svg viewBox="0 0 32 32"><circle cx="16" cy="16" r="15" fill="#ff4a1a"/><path d="M6 9.500h3.500l3.500 12 4-10 3.500 10 4-9q1-3.500-1.500-3t-5 0" fill="none" stroke="#fff" stroke-width="2.600"/></svg></div>
    <div class="app alert"><svg viewBox="0 0 32 32"><circle cx="15" cy="17" r="14.500" fill="#29a3df"/><path d="m4 18 18-8-3 16-5-4-3 3v-5z" fill="#fff"/><rect x="15" y="1" width="17" height="13" rx="2" fill="#f5393d"/><text x="24" y="11" font-size="10" fill="#fff" text-anchor="middle">..61</text></svg><i class="run pink"></i></div>
    <div class="app"><svg viewBox="0 0 32 32"><circle cx="16" cy="16" r="15" fill="#1ed760"/><path d="M7 11q10-3 19 2M8 16q8-2 16 2M9 21q7-2 13 2" fill="none" stroke="#0c1c12" stroke-width="2.500" stroke-linecap="round"/></svg><i class="run"></i></div>
    <div class="app alert"><svg viewBox="0 0 32 32"><circle cx="16" cy="16" r="15" fill="url(#gea)"/><path d="M9.500 11.500h8.500M7.500 15.800h8M4.500 20.200H13l8.500-9.700 5.500 9.700h-9" fill="none" stroke="#16100c" stroke-width="3"/></svg><i class="run pink"></i></div>
    <div class="app"><svg viewBox="0 0 32 32"><circle cx="16" cy="16" r="15" fill="#34a853"/><path d="M16 16 3 8.500a15 15 0 0 1 26 0z" fill="#ea4335"/><path d="M16 31 23 20l6.500-11.500A15 15 0 0 1 16 31z" fill="#fbbc05"/><path d="M16 8.500h13l-5 9z" fill="#fbbc05"/><circle cx="16" cy="16" r="7.500" fill="#fff"/><circle cx="16" cy="16" r="6" fill="#4285f4"/></svg><i class="run"></i></div>
    <div class="app"><svg viewBox="0 0 32 32"><circle cx="16" cy="16" r="15" fill="url(#gst)"/><circle cx="20.500" cy="12" r="5" fill="none" stroke="#fff" stroke-width="2.200"/><path d="m1 17 9 4 7-6" fill="none" stroke="#fff" stroke-width="4"/><circle cx="11.500" cy="21" r="3.800" fill="#fff"/></svg><i class="run"></i></div>
    <div class="app"><svg viewBox="0 0 32 32"><path d="m2 26 9-15 6 8 4-7 9 14h-8l-3-5-4 5-3-6-4 6z" fill="url(#gm)"/><circle cx="21" cy="6" r="3.800" fill="#ffab1a"/></svg><i class="run"></i></div>
  </div>
  <div class="tray">
    <svg class="up" width="14" height="10"><path d="m1 8 6-6 6 6" fill="none" stroke="#fff" stroke-width="1.700"/></svg>
    <span class="traymic"><svg width="22" height="22"><use href="#mic-off"/></svg></span>
    <svg width="22" height="18" viewBox="0 0 22 18" fill="none" stroke="#fff" stroke-width="1.500"><path d="M2 7q9-8.500 18 0M5 10.500q6-6 12 0M8 13.500q3-3 6 0"/><circle cx="11" cy="15.500" r="1.200" fill="#fff"/></svg>
    <svg width="20" height="18" viewBox="0 0 20 18" fill="none" stroke="#fff" stroke-width="1.400"><path d="M1 6.500h3L9 2v14l-5-4.500H1zM11.500 6q2 3 0 6M14 4q3.500 5 0 10"/><path d="M16.500 2q5 7 0 14" stroke="#888"/></svg>
    <svg width="22" height="18" viewBox="0 0 22 18"><path d="M7 3.500h10q2 0 2 2v8q0 2-2 2H5q-2 0-2-2V9" fill="none" stroke="#fff" stroke-width="1.600"/><path d="M8 6h8.500v7H5.500V9.500z" fill="#fff"/><path d="M20.800 7.500v4.500" stroke="#fff" stroke-width="1.800"/><path d="M6 0 1 6h3l-2 5 6-7H5z" fill="#fff"/></svg>
    <div class="when">20:27<br>10/12/2024</div>
    <svg class="bell" width="18" height="20" viewBox="0 0 18 20" fill="#8fe0ff"><path d="M9 1q6 0 6 6.500V12l2 3.500H1L3 12V7.500Q3 1 9 1zM6 17h6q-1 2.500-3 2.500T6 17z"/></svg>
  </div>
</footer>
</body>
</html>
```
FILE: styles.css
```css
*{box-sizing:border-box}
body{margin:0;width:1920px;height:1080px;overflow:hidden;background:#1f1f1f;color:#fff;font-family:"Open Sans","Noto Sans",sans-serif;font-size:13px;display:flex;flex-direction:column}
.defs{position:absolute}
svg{flex:none;display:block}
i,em{font-style:normal}

.titlebar{height:39px;background:#0a0a0a;display:flex;align-items:center;padding-left:14px}
.t-title{margin-left:9px;font-size:14.350px;padding-top:1px}
.t-ctl{margin-left:auto;display:flex;align-items:center;width:203px;color:#ddd}
.t-sep{width:1px;height:25px;background:#484848;margin:0 29px 0 11px}
.w-res{margin-left:41px}
.w-cls{margin-left:41px}

.toolbar{height:76px;background:#292929;display:flex;align-items:center;padding-left:18.500px}
.rec{margin-left:17px}
.clock{margin-left:15.500px;font-size:16.450px;color:#d6d6d6;letter-spacing:-.1px;padding-top:3px}
.tools{display:flex;margin-left:auto;margin-right:24px;height:76px}
.tool{display:flex;flex-direction:column;align-items:center;padding-top:14px;color:#d6d6d6;font-size:12.8px;white-space:nowrap;letter-spacing:-.1px}
.tool>span{line-height:18px;margin-top:6px}
.tool.on{color:#fff}
.pair{display:flex;align-items:center;gap:3px}
.pair b{font-size:14.8px;font-weight:600}
.sep{display:flex;justify-content:center;padding-top:19px}
.sep::before{content:"";width:1px;height:40px;background:#4a4a4a}
.chv{margin-top:33px;color:#ddd}
.w14{width:14px}.w20{width:20px}.w24{width:24px}.w66{width:66px}.w69{width:69px}.w70{width:70px}.w71{width:71px}.w72{width:72px}.w74{width:74px}.w76{width:76px}.w80{width:80px}.w84{width:84px}
.leave{width:116px;height:40px;margin:19px 0 0 6px;background:#d13438;border-radius:5px;display:flex;align-items:center;justify-content:center;gap:9px;font-size:16px;font-weight:600}

.stage{height:905px;position:relative;display:flex;padding:5px 0 0 90px}
.word{width:1442px;height:894px;background:#0a0a0a;display:flex;flex-direction:column;font-size:12.8px;color:#eee}
.w-title{height:50px;display:flex;align-items:center;padding-left:19px}
.autosave{width:56px;margin-left:16px;font-size:11.7px;letter-spacing:-.1px}
.toggle{width:49px;height:22px;border:1px solid #aaa;border-radius:11px;background:#222;display:flex;align-items:center;justify-content:space-between;padding:0 6px 0 3px;font-size:11.5px}
.toggle i{width:16px;height:16px;border-radius:8px;background:#fff}
.qa{margin-left:13px}
.docname{width:208px;margin-left:20px;font-size:12.950px;white-space:nowrap}
.w-search{width:388px;height:36px;margin-left:36px;background:#1f1f1f;border-radius:4px;display:flex;align-items:center;padding-left:14px;gap:14px;color:#b8b8b8;font-size:13.8px}
.w-ava{margin-left:230px}
.wm{margin-left:33px}
.wr{margin-left:40px}
.wc{margin-left:40px}
.w-tabs{height:36px;display:flex;padding-left:25.500px;font-size:13.400px}
.tab{padding-top:11px;height:32px;line-height:19px;white-space:nowrap}
.a1{width:52px}.a2{width:62.500px}.a3{width:58px}.a4{width:35px;margin-right:21px}.a5{width:68px}.a6{width:67px}.a7{width:93px}.a8{width:78px}.a9{width:67px}.a10{width:53px}
.cur{font-weight:700;border-bottom:2px solid #8ba9e8;letter-spacing:-.55px}
.w-acts{margin-left:auto;display:flex;padding:5px 14px 0 0}
.act{height:27px;border:1px solid #666;border-radius:4px;background:#1f1f1f;display:flex;align-items:center;font-size:13.3px;gap:5px;padding-left:5px}
.c1{width:100px}.c2{width:93px;margin-left:9px;gap:4px;padding-left:4px}.c3{width:79px;margin-left:8px;background:#5b8def;border-color:#5b8def;color:#12305e}
.mc{margin-left:1px}
.c3 .mc{margin-left:-1px}
.ribbon{margin:0 10px;height:111px;background:#292929;border-radius:8px;display:flex;padding-top:5px;position:relative}
.grp{height:101px;border-right:1px solid #4a4a4a;display:flex;flex-direction:column;align-items:center;text-align:center;font-size:12px;line-height:18px;padding-top:2px;position:relative}
.grp>svg,.two svg{height:36px;margin-bottom:4px}
.grp span svg{display:inline;height:9px;vertical-align:0}
.grp em{margin-top:auto;font-size:11px;line-height:15px;margin-bottom:-2px}
.g1{width:455px}.g2{width:82px}.g3{width:65px}.g4{width:107px}.g5{width:113px}.g6{width:73px}.g7{width:65px}.g8{width:64px}
.g1 em{padding-left:3px}
.two{display:flex;gap:13px}
.two div{display:flex;flex-direction:column;align-items:center}
.pens{display:flex;align-self:flex-start;padding-left:13px}
.sel{width:55px;height:68px;margin-top:2px;border:1px solid #777;border-radius:4px;background:#383838;display:flex;align-items:flex-end;padding:0 0 2px 8px}
.lasso{margin:3px 0 0 5px}
.pn{margin-left:13px}
.rchev{margin:auto 9px 8px auto}
.hruler,.vruler{font-size:11px}
.docarea{height:649px;display:flex;overflow:hidden}
.page{width:805px;height:649px;margin-left:289.500px;background:#fff;color:#111;font-family:Lato,sans-serif;font-size:13.900px;position:relative;padding-left:97px}
.page p{margin:0}
.page u{text-decoration:underline wavy #d8343c 1px;text-underline-offset:1px;text-decoration-skip-ink:none}
.page u.bl{text-decoration:underline double #3b66c4 1px}
.page .q{padding:39px 0 0 24.500px;height:70px;line-height:19px;white-space:nowrap}
.q span{display:inline-block;width:24px}
table{border-collapse:collapse;table-layout:fixed;position:relative;z-index:1}
td,th{border:1px solid #222;padding:0 0 2px;line-height:15px;height:18.900px;text-align:center;white-space:nowrap}
.tb1{width:610px}
.tb1 th:nth-child(3){letter-spacing:.12px}
.para{height:49.500px;line-height:20px;white-space:nowrap;padding-top:0}
.para b{letter-spacing:.15px}
.gantt{width:652px}
.gantt td{width:35.700px;text-align:left;padding-left:6.500px}
.gantt td:nth-child(1),.gantt td:nth-child(2){width:40px}
.axis{display:flex;height:48.500px;padding:.5px 0 0 26px;line-height:17px}
.axis span{width:35.750px;text-align:center}
.axis span:nth-child(11){margin-left:4px}
.tb3{width:530px;margin-bottom:30px}
.tb3 th:nth-child(1){width:132.500px;text-align:left;padding-left:6.500px}
.tb3 .hd th{height:55px;line-height:18px;padding-bottom:0;padding-top:0}
.tb3 .hd th:nth-child(n+2){width:79.900px}
.tb3 .hd th:nth-child(6){width:77.900px}
.marks,.ink{position:absolute;left:0;top:0}
.ink{z-index:2}
.scroll{margin-left:auto;width:22px;display:flex;flex-direction:column;align-items:center;padding-top:6px}
.scroll i{width:9px;height:56px;border-radius:4px;background:#9a9a9a;margin:519px 0 43px}
.status{height:22px;background:#141414;display:flex;align-items:center;padding:5px 0 0 14px;font-size:11.250px;white-space:nowrap}
.s1{width:78px;letter-spacing:-.15px}.s2{width:75px;letter-spacing:-.15px}.s3{margin-right:18px}.s4{width:118px}.s5{width:122px}.s7{width:582px;margin-left:4px;letter-spacing:.1px}
.s9{width:45px;margin-left:3px;padding-left:0;letter-spacing:-.1px}.s10{margin:0 15px 0 11px}.s11{width:44px;height:22px;background:#262626;display:flex;justify-content:center;align-items:center;margin-top:-5px;padding-top:5px}.s12{margin:0 19px 0 15px}.s14{margin-left:15px;letter-spacing:-.2px}
.who,.zoomer{position:absolute;top:860px;height:30px;background:rgba(10,10,10,.82);border-radius:5px;display:flex;align-items:center}
.who{left:15px;width:163px;padding-left:7.500px;font-size:14.600px;white-space:nowrap}
.zoomer{left:188px;width:81px;gap:23px;padding-left:13px;background:rgba(14,14,14,.85)}

.people{margin-left:87px;width:296px;padding-top:5px}
.tiles{display:grid;grid-template-columns:146px 146px;grid-auto-rows:108.500px;gap:4px}
.tile{border:1px solid #434343;border-radius:6px;position:relative;display:flex;align-items:center;justify-content:center;background:radial-gradient(circle at 15% 85%,var(--g1),transparent 65%),radial-gradient(circle at 85% 30%,var(--g2),transparent 70%),#262727}
.tile b{width:60px;height:60px;border-radius:50%;background:var(--bg);color:var(--fg);display:flex;align-items:center;justify-content:center;font-size:23px;font-weight:600;box-shadow:0 2px 6px rgba(0,0,0,.3)}
.tile i{position:absolute;left:4px;bottom:4px;width:35px;height:30px;border-radius:4px;background:rgba(13,12,12,.75);display:flex;align-items:center;justify-content:center}
.tile i svg{width:18px;height:18px;margin-right:1px}
.talk{border:4px solid #7f85f5}
.big{height:165px}
.big b{width:82px;height:82px;font-size:32px}
.big i{left:9px;bottom:9px}
.pager{height:49px;padding-bottom:1px;display:flex;align-items:center;justify-content:center;gap:16px;font-size:16.800px}
.k1{--bg:#e3def0;--fg:#453c6b;--g1:#2b2d2c;--g2:#2a2c2e}
.k2{--bg:#cbdaea;--fg:#143862;--g1:#342627;--g2:#302e26}
.k3{--bg:#e5cdd0;--fg:#581319;--g1:#302f28;--g2:#2b3a39}
.k4{--bg:#cbdaea;--fg:#143862;--g1:#23282c;--g2:#37291f}
.k5{--bg:#e3def0;--fg:#453c6b;--g1:#242231;--g2:#2a282b}
.k6{--bg:#fceecb;--fg:#7d5a0b;--g1:#302524;--g2:#31302c}
.k7{--bg:#d0ebdd;--fg:#1a6541;--g1:#28303a;--g2:#2a2a32}
.k8{--bg:#fce8d6;--fg:#905720;--g1:#2a2f31;--g2:#232c36}
.k9{--bg:#e6eddc;--fg:#46622e;--g1:#2a2a2a;--g2:#212128}
.k10{--bg:#fadcd7;--fg:#85362e;--g1:#233536;--g2:#2f2729}
.k11{--bg:#dbe0d6;--fg:#2e4425;--g1:#342829;--g2:#2d302e}
.k12{--bg:#d5e2e8;--fg:#1f4450;--g1:#23222a;--g2:#352325}
.k13{--bg:#d0ebdd;--fg:#1a6541;--g1:#3a2b2a;--g2:#293236}

.taskbar{height:60px;border-top:1px solid #44464c;background:linear-gradient(90deg,#1b222c 0,#1c2330 18%,#162252 30%,#16204a 42%,#1c2036 52%,#172250 66%,#1b2133 80%,#1b212d 100%);display:flex;align-items:center;padding-left:24px}
.weather{margin-top:-8px}
.win{margin-left:208px}
.t-search{width:274px;height:40px;margin-left:16px;border:1px solid #4e566f;border-radius:20px;background:linear-gradient(90deg,#3b4350,#35406c);display:flex;align-items:center;padding-left:14px;font-size:15.800px;color:#ddd}
.t-search span{margin-left:11px}
.scene{margin-left:auto}
.apps{display:flex;gap:6px;margin-left:6px}
.app{width:49px;height:50px;border-radius:5px;display:flex;justify-content:center;position:relative;padding-top:9px}
.app svg{width:30px;height:30px}
.act2{background:rgba(255,255,255,.09);border:1px solid #343c56;padding-top:8px}
.alert{background:#84474c}
.run{position:absolute;bottom:1px;left:20px;width:9px;height:4px;border-radius:2px;background:#8f939c}
.run.wide{left:14px;width:19px;background:#4cc2ff}
.run.pink{background:#ff99a4}
.dot{position:absolute;left:25px;top:4px;width:19px;height:20px;border-radius:50%;background:#ffb900}
.tray{margin-left:auto;display:flex;align-items:center;padding-right:26px;gap:8px}
.traymic{width:40px;height:50px;border-radius:5px;background:#292e39;border:1px solid #353a45;display:flex;align-items:center;justify-content:center;margin:0 1px 0 5px}
.when{width:93px;padding-right:2px;text-align:right;font-size:14.700px;line-height:20px;letter-spacing:-.05px;margin-top:-2px}
```
